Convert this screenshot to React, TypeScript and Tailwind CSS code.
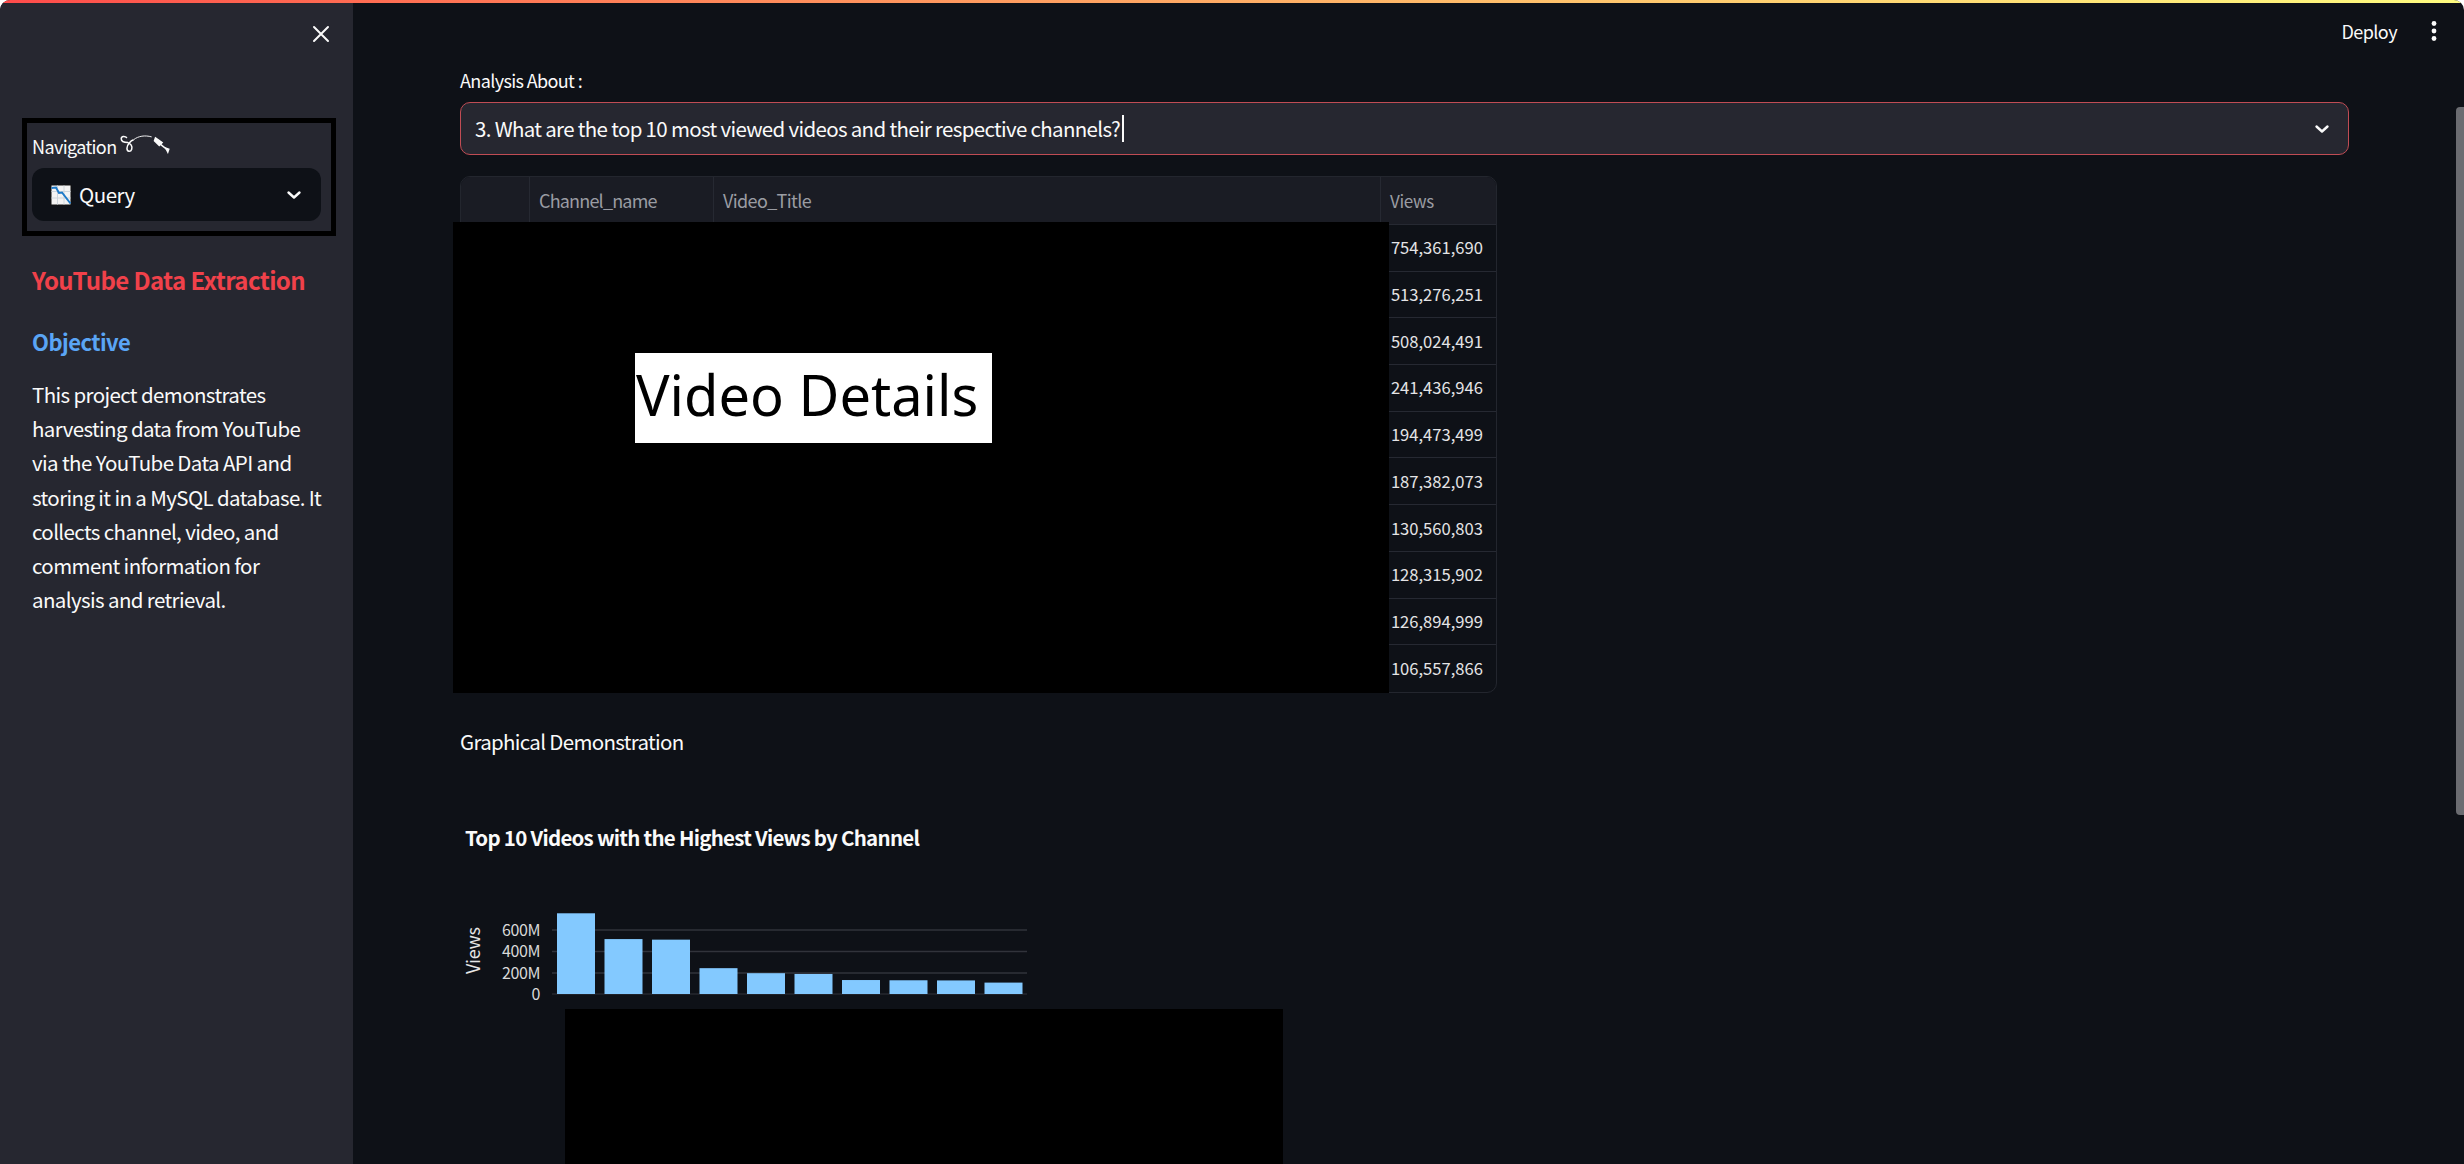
const src = '"Noto Sans CJK SC", "Noto Sans", sans-serif';
const views = ['754,361,690','513,276,251','508,024,491','241,436,946','194,473,499','187,382,073','130,560,803','128,315,902','126,894,999','106,557,866'];
const values = [754.36,513.28,508.02,241.44,194.47,187.38,130.56,128.32,126.89,106.56];

function Chevron({ className }: { className?: string }) {
  return (
    <svg className={className} width="16" height="16" viewBox="0 0 16 16" fill="none" stroke="#fafafa" strokeWidth="2.4" strokeLinecap="round" strokeLinejoin="round">
      <path d="M2.5 5.5 8 10.5 13.5 5.5" />
    </svg>
  );
}

function Emoji() {
  return (
    <svg width="22" height="22" viewBox="0 0 22 22">
      <rect x="0.5" y="0.5" width="21" height="21" fill="#111" />
      <rect x="1.5" y="1.5" width="19" height="19" fill="#f3f3f3" />
      <path d="M1.5 7.5H20.5M1.5 14H20.5M7.5 1.5V20.5M14 1.5V20.5" stroke="#cfd6dc" strokeWidth="1" />
      <path d="M1.5 4 6 3.5 9 9 12 8.5 20.5 19.5" stroke="#1e7ac8" strokeWidth="2" fill="none" />
    </svg>
  );
}

function BowArrow() {
  return (
    <svg width="50" height="19" viewBox="0 0 52 20" fill="none" stroke="#fafafa" strokeWidth="1.6">
      <path d="M7 3C5 1 1 1 1 4 1 7 5 8 8 8 11 9 13 12 12 15 11 18 7 18 7 14 7 10 11 6 14 5" />
      <path d="M14 5C19 1 26 0 33 2" strokeWidth="1" />
      <path d="M40 8 50 16" strokeWidth="1.6" />
      <path d="M37 3 44 8 41 11 36 6Z" fill="#fafafa" />
      <path d="M48 14 51 15 50 18Z" fill="#fafafa" />
    </svg>
  );
}

function Chart() {
  const bw = 38, pitch = 47.5, x0 = 97, base = 105;
  const h = (v: number) => (v / 200) * 21.4;
  const grid = [['600M', 41], ['400M', 62.5], ['200M', 84], ['0', 105]] as const;
  return (
    <svg width="620" height="115" viewBox="0 0 620 115" className="block" style={{ fontFamily: src }}>
      <text x="0" y="0" transform="translate(20 85) rotate(-90)" fill="#e6e6e6" fontSize="18" letterSpacing="-0.3">Views</text>
      {grid.map(([t, y]) => (
        <g key={t}>
          <line x1="92" x2="567" y1={y} y2={y} stroke="#31333b" strokeWidth={t === '0' ? 1 : 1.5} />
          <text x="80" y={y + 5.5} textAnchor="end" fill="#d9d9d9" fontSize="16" letterSpacing="-0.4">{t}</text>
        </g>
      ))}
      {values.map((v, i) => (
        <rect key={i} x={x0 + i * pitch} y={base - h(v)} width={bw} height={h(v)} fill="#83c9ff" />
      ))}
    </svg>
  );
}

export default function App() {
  return (
    <div className="h-[1164px] w-[2464px] overflow-hidden bg-white" style={{ fontFamily: src }}>
      <div className="relative flex h-full w-full flex-col overflow-hidden rounded-t-[10px] bg-[#0e1117] text-[#fafafa]">
        <div className="h-[3px] w-full shrink-0 bg-gradient-to-r from-[#ff4b4b] to-[#fffd80]" />
        <div className="flex min-h-0 flex-1">
          <aside className="flex w-[353px] shrink-0 flex-col bg-[#262730] pl-[22px]">
            <div className="flex h-[115px] shrink-0 justify-end pr-[23px] pt-[22px]">
              <svg width="18" height="18" viewBox="0 0 18 18" stroke="#fafafa" strokeWidth="2" strokeLinecap="round">
                <path d="M2 2 16 16M16 2 2 16" />
              </svg>
            </div>
            <div className="h-[118px] w-[314px] shrink-0 border-[5px] border-black px-[5px]">
              <div className="flex h-[45px] items-center text-[18px] leading-none tracking-[-0.035em]">
                <span>Navigation</span>
                <span className="ml-[3px] -mt-[3px]"><BowArrow /></span>
              </div>
              <div className="flex h-[53px] w-[289px] items-center rounded-[12px] bg-[#0e1117] pl-[18px] pr-[19px]">
                <Emoji />
                <span className="ml-[7px] flex-1 text-[20.5px] tracking-[-0.025em] -mt-[1px]">Query</span>
                <Chevron />
              </div>
            </div>
            <div className="mt-[26px] pl-[10px] pr-[16px]">
              <h1 className="whitespace-nowrap text-[24px] font-semibold leading-[36px] tracking-[-0.025em] text-[#f0414a]">YouTube Data Extraction</h1>
              <h2 className="mt-[25px] text-[22px] font-semibold leading-[36px] tracking-[-0.025em] text-[#5aa5f5]">Objective</h2>
              <p className="mt-[18px] w-[296px] text-[20.5px] leading-[34.2px] tracking-[-0.03em]">
                This project demonstrates harvesting data from YouTube via the YouTube Data API and storing it in a MySQL database. It collects channel, video, and comment information for analysis and retrieval.
              </p>
            </div>
          </aside>

          <main className="relative min-w-0 flex-1 pl-[107px]">
            <div className="absolute right-[26px] top-[14px] flex items-center">
              <span className="text-[18px] leading-[28px] tracking-[-0.03em]">Deploy</span>
              <svg className="ml-[33px]" width="8" height="22" viewBox="0 0 8 22" fill="#fafafa">
                <circle cx="4" cy="3.5" r="2.4" /><circle cx="4" cy="11" r="2.4" /><circle cx="4" cy="18.5" r="2.4" />
              </svg>
            </div>
            <div className="absolute right-0 top-[104px] h-[708px] w-[8px] rounded-l-[4px] bg-[#6b6c71]" />

            <div className="w-[1889px]">
              <div className="pt-[65px] text-[18px] leading-[24px] tracking-[-0.035em]">Analysis About :</div>
              <div className="mt-[10px] flex h-[53px] items-center rounded-[10px] border border-[#c04c54] bg-[#262730] pl-[14px] pr-[18px]">
                <span className="text-[20.5px] tracking-[-0.033em]">3. What are the top 10 most viewed videos and their respective channels?</span>
                <span className="ml-[2px] h-[27px] w-[2px] bg-[#fafafa]" />
                <span className="flex-1" />
                <Chevron />
              </div>
            </div>

            <div className="relative mt-[21px] w-[1037px]">
              <div className="overflow-hidden rounded-[10px] border border-[#23262e]">
                <div className="flex h-[48px] items-center border-b border-[#262932] bg-[#1a1c24] text-[#9a9ca3]">
                  <div className="h-full w-[69px] border-r border-[#262932]" />
                  <div className="flex h-full w-[184px] items-center border-r border-[#262932] pl-[9px] text-[18px] tracking-[-0.045em]">Channel_name</div>
                  <div className="flex h-full w-[667px] items-center border-r border-[#262932] pl-[9px] text-[18px] tracking-[-0.035em]">Video_Title</div>
                  <div className="pl-[9px] text-[17px] tracking-[-0.02em]">Views</div>
                </div>
                {views.map((v, i) => (
                  <div key={v} className={`flex h-[46.7px] items-center justify-end pr-[13px] text-[16.6px] text-[#e4e4e6] ${i < 9 ? 'border-b border-[#262932]' : ''}`}>
                    {v}
                  </div>
                ))}
              </div>
              <div className="absolute left-[-7px] top-[46px] h-[471px] w-[936px] bg-black pl-[182px] pt-[131px]">
                <div className="flex h-[90px] w-[357px] items-center whitespace-nowrap bg-white pb-[8px] pl-[1px] text-[56px] leading-none text-black" style={{ fontFamily: '"Noto Sans", sans-serif' }}>
                  Video Details
                </div>
              </div>
            </div>

            <div className="mt-[32px] text-[20.5px] leading-[32px] tracking-[-0.033em]">Graphical Demonstration</div>
            <div className="mt-[64px] pl-[5px] text-[20.5px] font-bold leading-[32px] tracking-[-0.036em]">Top 10 Videos with the Highest Views by Channel</div>
            <div className="mt-[36px]"><Chart /></div>
            <div className="absolute bottom-0 left-[212px] h-[155px] w-[718px] bg-black" />
          </main>
        </div>
      </div>
    </div>
  );
}
